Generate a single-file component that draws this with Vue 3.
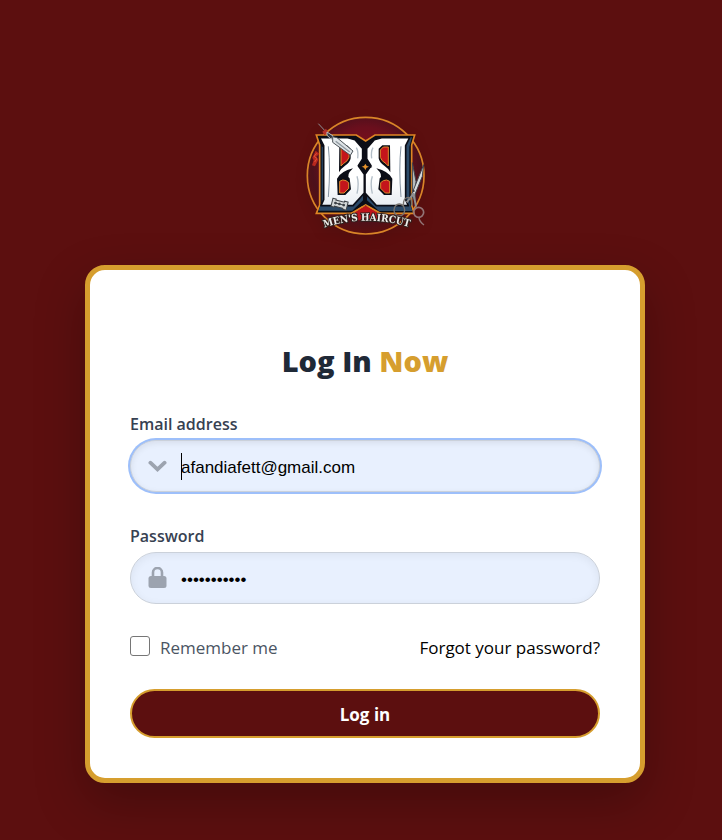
<script setup>
import { ref } from 'vue'

const email = ref('afandiafett@gmail.com')
const password = ref('barbershop1')
const remember = ref(false)
</script>

<template>
  <main class="page">
    <svg class="logo" viewBox="0 0 420 420" role="img" aria-label="Men's Haircut">
      <defs>
        <radialGradient id="disc" cx="50%" cy="42%" r="56%">
          <stop offset="0" stop-color="#8a101b" />
          <stop offset="0.6" stop-color="#6a0f1d" />
          <stop offset="0.82" stop-color="#4c101b" />
          <stop offset="1" stop-color="#5a0f10" />
        </radialGradient>
        <linearGradient id="steel" x1="0" y1="0" x2="0" y2="1">
          <stop offset="0" stop-color="#ffffff" />
          <stop offset="0.6" stop-color="#ffffff" />
          <stop offset="1" stop-color="#e8edf2" />
        </linearGradient>
        <g id="letter">
          <path
            d="M74 98H158L180 104L203 130V162L190 182L208 208V264L174 302L78 302L86 284V122Z"
            fill="url(#steel)" stroke="#0b0d16" stroke-width="5" stroke-linejoin="round"
          />
          <path d="M133 121H156L167 131V160Q165 173 150 182Q138 190 132 202Z" fill="#0b0d16" />
          <path d="M138 126H153L162 135V157Q159 168 145 176L138 183Z" fill="#c4151b" stroke="#dd8a2c" stroke-width="3" />
          <path d="M126 221Q137 199 174 190Q152 211 164 220L168 253L151 270H128Z" fill="#0b0d16" />
          <path d="M134 229Q143 222 153 227L161 233V250L147 264H134Z" fill="#c4151b" stroke="#dd8a2c" stroke-width="3" />
          <path d="M100 124Q107 190 100 276" fill="none" stroke="#8795a3" stroke-width="3" />
          <path d="M184 128Q191 140 188 160M186 214Q193 235 186 266" fill="none" stroke="#b3bec7" stroke-width="4" />
        </g>
        <path id="caption" d="M72 373Q212 322 359 371" />
      </defs>

      <circle cx="212" cy="212" r="175" fill="url(#disc)" stroke="#d98528" stroke-width="5" />
      <path
        d="M64 90H184L212 108L240 90H359L350 120V300L357 325H250L222 306H202L174 325H64L74 300V120Z"
        fill="#0b0d16" stroke="#df8524" stroke-width="5"
      />
      <path d="M76 300L170 300L204 266V286L172 317H71Z" fill="#2c4a68" />
      <path d="M332 98L351 97L343 126V290L352 318H252L216 286V267H332Z" fill="#2c4a68" />
      <path d="M80 124L86 128V284L80 292Z" fill="#2c4a68" />
      <path d="M180 322L212 302L246 322V346H180Z" fill="#bd141b" />
      <path d="M167 326L212 299L259 326" fill="none" stroke="#df8524" stroke-width="4" />
      <use href="#letter" />
      <use href="#letter" transform="translate(418 0) scale(-1 1)" />
      <path d="M211 172L216 181L227 186L216 190L211 200L206 190L195 186L206 181Z" fill="#e7932b" stroke="#0b0d16" stroke-width="4" />

      <path d="M62 137L73 146L63 156L70 164L60 184L51 181L56 166L52 158Z" fill="#b8271e" />
      <path d="M65 145L57 154L66 160L59 171" fill="none" stroke="#e05537" stroke-width="3" />
      <path d="M70 56L99 87" stroke="#8e9095" stroke-width="3" />
      <path d="M82 80L93 71L100 83L88 91Z" fill="#b8312b" />
      <path d="M96 81L114 93L109 103L96 91Z" fill="#30353d" stroke="#b8bdc1" stroke-width="3" />
      <path d="M113 95L126 98L174 138L166 151L113 112Z" fill="#dfe4e7" stroke="#4c5359" stroke-width="3" />
      <path d="M122 109L164 141" stroke="#8d979e" stroke-width="4" />

      <g transform="rotate(14 133 298)">
        <path d="M110 285H120V288H146V285H157V310H146V307H120V310H110Z" fill="#d3d6d6" stroke="#3d4247" stroke-width="3" />
        <path d="M117 297H150" stroke="#3d4247" stroke-width="3" />
        <circle cx="121" cy="297" r="4" fill="#3d4247" />
        <circle cx="133" cy="297" r="4" fill="#3d4247" />
        <circle cx="146" cy="297" r="4" fill="#3d4247" />
      </g>

      <path d="M352 173L363 229L360 284L352 270Z" fill="#b6bbbd" stroke="#41444b" stroke-width="3" />
      <path d="M386 179L382 214L354 283L350 268Z" fill="#d8dcde" stroke="#41444b" stroke-width="3" />
      <path d="M357 264L335 292M356 268L363 305" stroke="#8e8f91" stroke-width="6" />
      <circle cx="356" cy="258" r="3" fill="#33353a" />
      <ellipse cx="313" cy="315" rx="16" ry="18" fill="none" stroke="#77736f" stroke-width="4" />
      <path d="M325 303Q324 277 340 277Q352 279 350 302" fill="none" stroke="#77736f" stroke-width="4" />
      <circle cx="371" cy="322" r="15" fill="none" stroke="#927476" stroke-width="5" />
      <path d="M372 337Q373 350 387 360" fill="none" stroke="#927476" stroke-width="4" />

      <text class="caption">
        <textPath href="#caption" startOffset="50%" text-anchor="middle">MEN'S HAIRCUT</textPath>
      </text>
    </svg>

    <section class="card">
      <h1>Log In <span>Now</span></h1>
      <form @submit.prevent>
        <div class="field">
          <label for="email">Email address</label>
          <div class="control focused">
            <svg class="icon" viewBox="0 0 20 20" aria-hidden="true">
              <path d="M2.5 6.5L10 13.5L17.5 6.5" fill="none" stroke="currentColor" stroke-width="4" stroke-linecap="round" stroke-linejoin="miter" />
            </svg>
            <span class="caret" aria-hidden="true"></span>
            <input id="email" v-model="email" type="email" autocomplete="email" />
          </div>
        </div>
        <div class="field">
          <label for="password">Password</label>
          <div class="control">
            <svg class="icon" viewBox="0 0 18 22" aria-hidden="true">
              <path d="M4.5 10V5.5a4.5 4.5 0 0 1 9 0v4.500" fill="none" stroke="currentColor" stroke-width="2.6" />
              <rect x="0" y="9" width="18" height="12" rx="2.5" fill="currentColor" />
            </svg>
            <input id="password" v-model="password" type="password" autocomplete="current-password" />
          </div>
        </div>
        <div class="options">
          <label class="remember" for="remember">
            <input id="remember" v-model="remember" type="checkbox" />
            Remember me
          </label>
          <a href="#">Forgot your password?</a>
        </div>
        <button type="submit">Log in</button>
      </form>
    </section>
  </main>
</template>

<style>
body {
  background: #5c0f0f;
}
</style>

<style scoped>
* {
  box-sizing: border-box;
}
.page {
  min-height: 100vh;
  padding: 105px 77px 57px 85px;
  display: flex;
  flex-direction: column;
  align-items: center;
  gap: 20px;
  background: #5c0f0f;
  font-family: "Segoe UI", "Open Sans", "Noto Sans", sans-serif;
  font-size: 17px;
  line-height: 24px;
}
.logo {
  width: 140px;
  height: 140px;
  flex: none;
  filter: drop-shadow(0 4px 6px rgba(0, 0, 0, 0.1));
}
.caption {
  font-family: "DejaVu Serif Condensed", "DejaVu Serif", serif;
  font-size: 30px;
  font-weight: 700;
  fill: #f1efec;
  stroke: #30221f;
  stroke-width: 6px;
  paint-order: stroke;
}
.card {
  width: 100%;
  max-width: 560px;
  padding: 71px 40px 40px;
  border: 5px solid #d69e2e;
  border-radius: 20px;
  background: #fff;
  box-shadow: 0 20px 50px rgba(0, 0, 0, 0.25);
}
h1 {
  margin: 0 0 31px;
  text-align: center;
  font-size: 29px;
  line-height: 40px;
  font-weight: 800;
  color: #1f2937;
}
h1 span {
  color: #d69e2e;
}
.field {
  margin-bottom: 32px;
}
.field label {
  display: block;
  margin-bottom: 4px;
  font-weight: 600;
  font-size: 16px;
  color: #374151;
}
.control {
  height: 52px;
  padding: 0 17px;
  display: flex;
  align-items: center;
  border: 1px solid #cbd1da;
  border-radius: 26px;
  background: #e8f0fe;
  box-shadow: inset 0 2px 8px rgba(0, 0, 0, 0.06);
}
.control.focused {
  box-shadow: inset 0 2px 6px rgba(0, 0, 0, 0.08), 0 0 0 2px #9dbffa;
}
.icon {
  width: 19px;
  height: 22px;
  flex: none;
  margin-right: 14px;
  color: #9ca3af;
}
.caret {
  width: 1px;
  height: 27px;
  margin-right: -1px;
  background: #000;
}
.control input {
  flex: 1;
  min-width: 0;
  height: 48px;
  padding: 4px 0 0;
  border: 0;
  outline: 0;
  background: transparent;
  color: #000;
  font-family: "Liberation Sans", Arial, sans-serif;
  font-size: 17px;
}
.options {
  display: flex;
  align-items: center;
  justify-content: space-between;
  margin-bottom: 29px;
}
.remember {
  display: flex;
  align-items: flex-start;
  gap: 10px;
  color: #4b5563;
}
.remember input {
  appearance: none;
  width: 20px;
  height: 20px;
  margin: 0;
  border: 1px solid #767676;
  border-radius: 3px;
  background: #fff;
}
.remember input:checked {
  background: #5c0f0f;
}
.options a {
  color: #000;
  text-decoration: none;
}
button {
  width: 100%;
  height: 49px;
  padding: 2px 16px 0;
  border: 2px solid #d69e2e;
  border-radius: 25px;
  background: #5c0f0f;
  color: #fff;
  font-family: inherit;
  font-size: 17px;
  font-weight: 700;
  cursor: pointer;
}
</style>
